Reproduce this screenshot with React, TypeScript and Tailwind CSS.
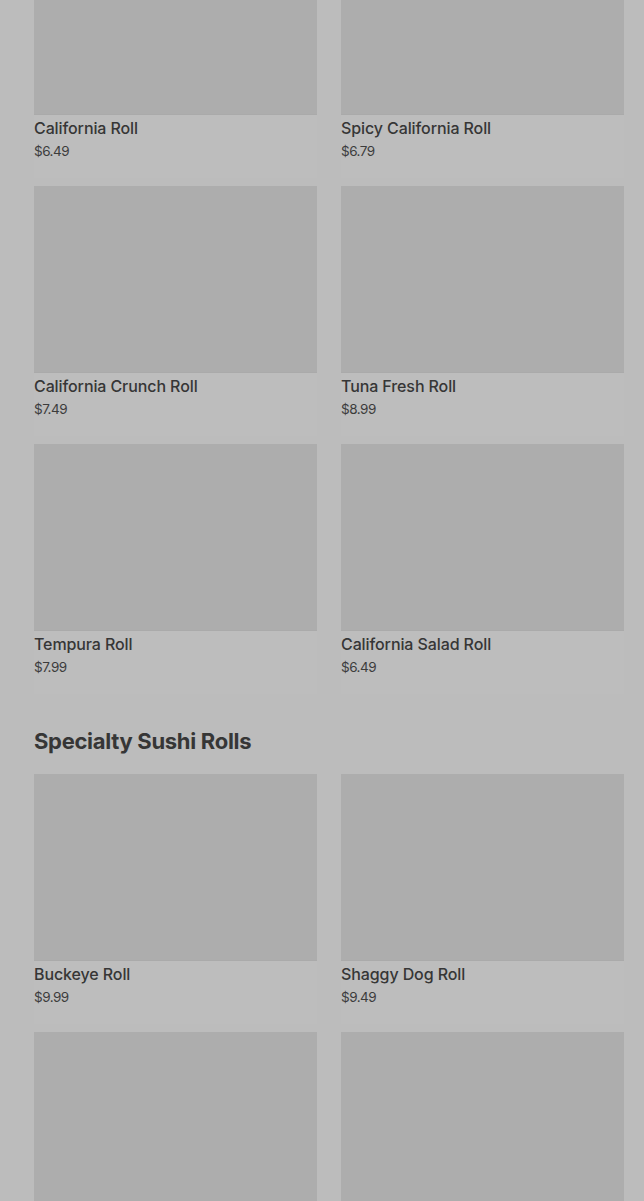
import React from 'react';

type Item = { name?: string; price?: string };

const CLASSIC: Item[] = [
  { name: 'California Roll', price: '$6.49' },
  { name: 'Spicy California Roll', price: '$6.79' },
  { name: 'California Crunch Roll', price: '$7.49' },
  { name: 'Tuna Fresh Roll', price: '$8.99' },
  { name: 'Tempura Roll', price: '$7.99' },
  { name: 'California Salad Roll', price: '$6.49' },
];

// last row is only partly on screen, its labels fall below the fold
const SPECIALTY: Item[] = [
  { name: 'Buckeye Roll', price: '$9.99' },
  { name: 'Shaggy Dog Roll', price: '$9.49' },
  {},
  {},
];

const MenuCard: React.FC<{ item: Item }> = ({ item }) => (
  <div className="bg-[#bdbdbd] h-[250px] flex flex-col">
    <div className="h-[187px] bg-[#adadad] border-b border-[#aaaaaa]" />
    {item.name && (
      <div className="pt-[2px]">
        <p className="text-[16px] leading-[22px] font-medium text-[#363636] tracking-[-0.1px]">{item.name}</p>
        <p className="mt-[2px] text-[13.5px] leading-[20px] text-[#3c3c3c] tracking-[-0.5px]">{item.price}</p>
      </div>
    )}
  </div>
);

const Grid: React.FC<{ items: Item[] }> = ({ items }) => (
  <div className="grid grid-cols-2 gap-x-[24px] gap-y-[8px]">
    {items.map((item, i) => (
      <MenuCard key={i} item={item} />
    ))}
  </div>
);

export default function App() {
  return (
    <div
      className="h-[1201px] overflow-hidden bg-[#bcbcbc] pl-[34px] pr-[20px]"
      style={{ fontFamily: 'Inter, "Noto Sans", sans-serif' }}
    >
      <div className="-mt-[72px]">
        <Grid items={CLASSIC} />
        <h2 className="mt-[33px] mb-[19px] text-[22px] leading-[28px] font-bold text-[#363636] tracking-[-0.3px]">
          Specialty Sushi Rolls
        </h2>
        <Grid items={SPECIALTY} />
      </div>
    </div>
  );
}
